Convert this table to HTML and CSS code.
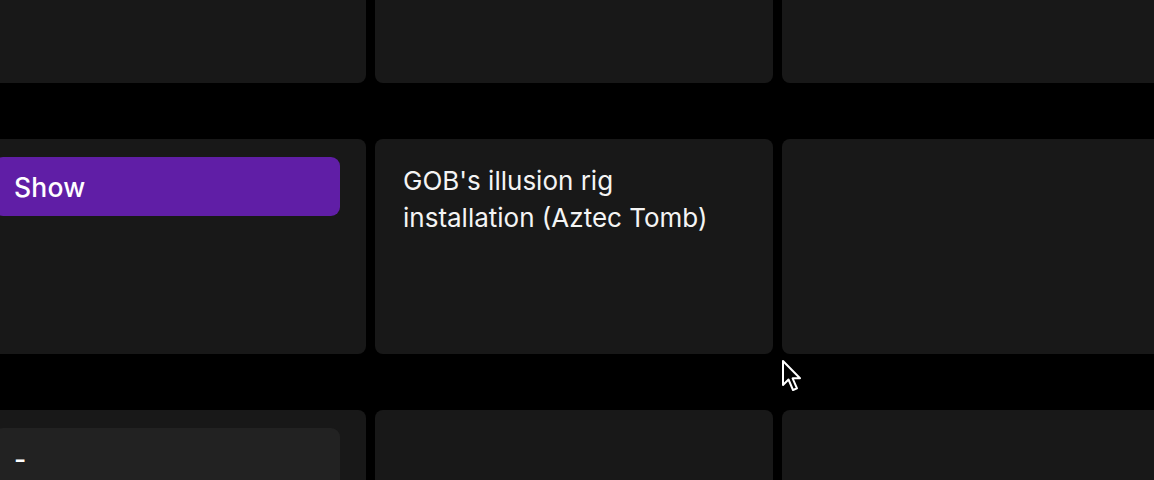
FILE: index.html
```html
<!DOCTYPE html>
<html>
<head>
<meta charset="utf-8">
<link rel="stylesheet" href="styles.css">
</head>
<body>
<div class="viewport">
  <div class="board">
    <div class="card"></div>
    <div class="card"></div>
    <div class="card"></div>

    <div class="card"><div class="tag tag-purple">Show</div></div>
    <div class="card card-text">GOB's illusion rig installation (Aztec Tomb)</div>
    <div class="card"></div>

    <div class="card"><div class="tag tag-gray">-</div></div>
    <div class="card"></div>
    <div class="card"></div>
  </div>
  <svg class="cursor" width="24" height="36" viewBox="0 0 24 36">
    <path d="M2 2 L2 26 L7.5 20.5 L12 31 L16 29.3 L11.6 19.3 L19 19.3 Z" fill="#000" stroke="#fff" stroke-width="2" stroke-linejoin="round"/>
  </svg>
</div>
</body>
</html>
```
FILE: styles.css
```css
html, body {
  margin: 0;
  padding: 0;
  background: #000;
}
.viewport {
  position: relative;
  width: 1154px;
  height: 480px;
  overflow: hidden;
  background: #000;
  font-family: Inter, "Noto Sans", sans-serif;
}
.board {
  display: grid;
  grid-template-columns: 398px 398px 398px;
  grid-auto-rows: 215px;
  column-gap: 9px;
  row-gap: 56px;
  margin-left: -32px;
  margin-top: -132px;
}
.card {
  background: #181818;
  border-radius: 8px;
  padding: 18px 26px 0 26px;
  box-sizing: border-box;
}
.card-text {
  color: #f4f4f4;
  font-size: 26px;
  line-height: 37px;
  padding: 23px 56px 0 28px;
}
.tag {
  height: 59px;
  border-radius: 9px;
  display: flex;
  align-items: center;
  padding-left: 20px;
  color: #fff;
  font-size: 26.5px;
  font-weight: 500;
  letter-spacing: 0.2px;
}
.tag-purple {
  background: #601ea6;
}
.tag-gray {
  background: #222222;
  padding-top: 1px;
}
.cursor {
  position: absolute;
  left: 781px;
  top: 359px;
}
```
